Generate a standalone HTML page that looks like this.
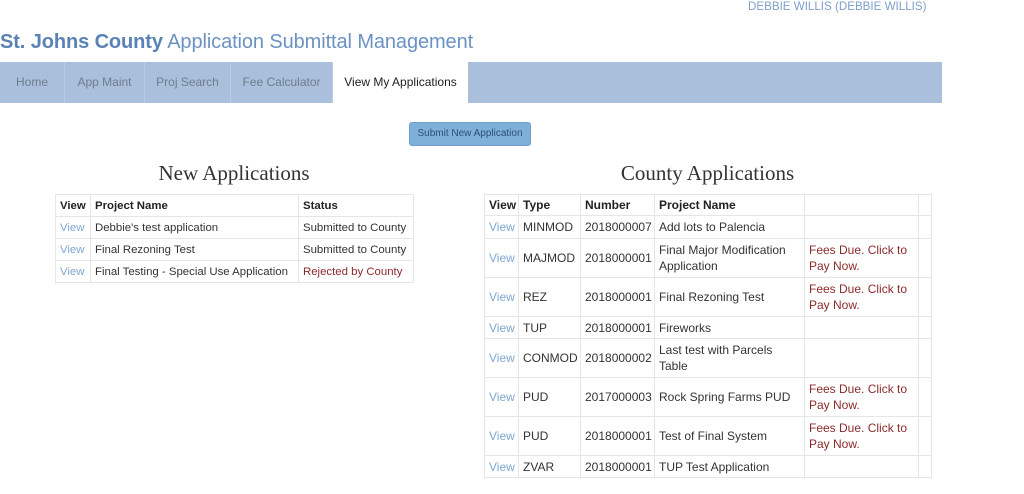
<!DOCTYPE html>
<html><head><meta charset="utf-8"><style>
*{margin:0;padding:0;box-sizing:border-box}
body{width:1024px;height:494px;background:#fff;font-family:"Liberation Sans",sans-serif;font-size:12px;color:#333;position:relative;overflow:hidden}
.user{position:absolute;left:748px;top:0;color:#7f9fca;font-size:11.6px}
h1{position:absolute;left:0;top:31px;font-size:20px;font-weight:normal;color:#6b92c2;white-space:nowrap;letter-spacing:-0.1px}
h1 b{color:#5a82b6}
.nav{position:absolute;left:0;top:62px;width:942px;height:41px;background:#a9bfdc}
.nav div{position:absolute;top:0;height:41px;line-height:40px;text-align:center;color:#6d7d90;border-right:1px solid #bccde3;font-size:12px}
.nav .act{background:#fff;color:#222;border:none}
.btn{position:absolute;left:409px;top:122px;width:122px;height:24px;background:#7fb0da;border:1px solid #6c9fcd;border-radius:3px;color:#2d4f73;font-size:10px;text-align:center;line-height:22px}
h2{position:absolute;font-family:"Liberation Serif",serif;font-weight:normal;font-size:21px;color:#333;text-align:center}
table{position:absolute;border-collapse:collapse;table-layout:fixed;font-size:12px}
td,th{border:1px solid #e6e6e6;padding:0 4px;text-align:left;vertical-align:middle;line-height:16px}
th{font-weight:bold;color:#222}
.left td,.left th{white-space:nowrap;font-size:11.4px;overflow:hidden;padding:0 4px}
.v{color:#7fa7d0}
.r{color:#8b2a2a}
</style></head><body>
<div class="user">DEBBIE WILLIS (DEBBIE WILLIS)</div>
<h1><b>St. Johns County</b> Application Submittal Management</h1>
<div class="nav">
<div style="left:0;width:65px">Home</div>
<div style="left:65px;width:80px">App Maint</div>
<div style="left:145px;width:86px">Proj Search</div>
<div style="left:231px;width:102px">Fee Calculator</div>
<div class="act" style="left:333px;width:135px">View My Applications</div>
</div>
<div class="btn">Submit New Application</div>
<h2 style="left:55px;width:358px;top:161px">New Applications</h2>
<h2 style="left:484px;width:447px;top:161px">County Applications</h2>
<table class="left" style="left:55px;top:194px;width:358px">
<colgroup><col style="width:35px"><col style="width:208px"><col style="width:115px"></colgroup>
<tr style="height:22px"><th>View</th><th>Project Name</th><th>Status</th></tr>
<tr style="height:22px"><td class="v">View</td><td>Debbie's test application</td><td>Submitted to County</td></tr>
<tr style="height:22px"><td class="v">View</td><td>Final Rezoning Test</td><td>Submitted to County</td></tr>
<tr style="height:22px"><td class="v">View</td><td>Final Testing - Special Use Application</td><td class="r">Rejected by County</td></tr>
</table>
<table style="left:484px;top:194px;width:447px">
<colgroup><col style="width:34px"><col style="width:62px"><col style="width:74px"><col style="width:150px"><col style="width:114px"><col style="width:13px"></colgroup>
<tr style="height:21px"><th>View</th><th>Type</th><th>Number</th><th>Project Name</th><th></th><th></th></tr>
<tr style="height:23px"><td class="v">View</td><td>MINMOD</td><td>2018000007</td><td>Add lots to Palencia</td><td></td><td></td></tr>
<tr style="height:39px"><td class="v">View</td><td>MAJMOD</td><td>2018000001</td><td>Final Major Modification Application</td><td class="r">Fees Due. Click to Pay Now.</td><td></td></tr>
<tr style="height:39px"><td class="v">View</td><td>REZ</td><td>2018000001</td><td>Final Rezoning Test</td><td class="r">Fees Due. Click to Pay Now.</td><td></td></tr>
<tr style="height:22px"><td class="v">View</td><td>TUP</td><td>2018000001</td><td>Fireworks</td><td></td><td></td></tr>
<tr style="height:39px"><td class="v">View</td><td>CONMOD</td><td>2018000002</td><td>Last test with Parcels Table</td><td></td><td></td></tr>
<tr style="height:39px"><td class="v">View</td><td>PUD</td><td>2017000003</td><td>Rock Spring Farms PUD</td><td class="r">Fees Due. Click to Pay Now.</td><td></td></tr>
<tr style="height:39px"><td class="v">View</td><td>PUD</td><td>2018000001</td><td>Test of Final System</td><td class="r">Fees Due. Click to Pay Now.</td><td></td></tr>
<tr style="height:22px"><td class="v">View</td><td>ZVAR</td><td>2018000001</td><td>TUP Test Application</td><td></td><td></td></tr>
</table>
</body></html>
